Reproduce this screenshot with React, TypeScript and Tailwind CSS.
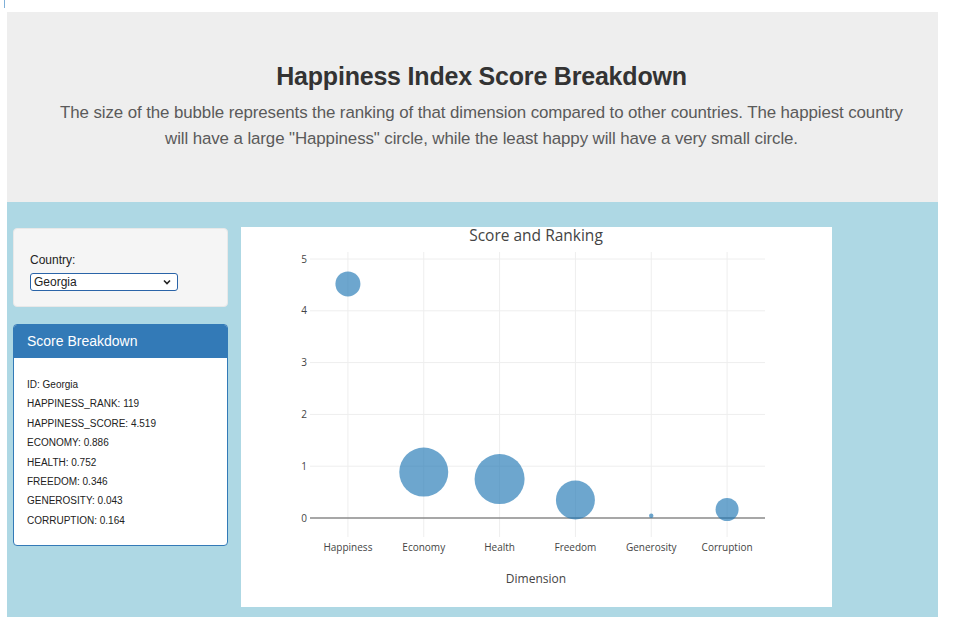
import React from "react";

const dims = [
  { name: "Happiness", value: 4.519, r: 12.5 },
  { name: "Economy", value: 0.886, r: 24.5 },
  { name: "Health", value: 0.752, r: 25 },
  { name: "Freedom", value: 0.346, r: 19.5 },
  { name: "Generosity", value: 0.043, r: 2.2 },
  { name: "Corruption", value: 0.164, r: 11.5 },
];

const info = [
  "ID: Georgia",
  "HAPPINESS_RANK: 119",
  "HAPPINESS_SCORE: 4.519",
  "ECONOMY: 0.886",
  "HEALTH: 0.752",
  "FREEDOM: 0.346",
  "GENEROSITY: 0.043",
  "CORRUPTION: 0.164",
];

// plot area inside the chart card
const X0 = 69;
const X1 = 524;
const ZERO = 291;
const UNIT = 51.8;
const STEP = (X1 - X0) / dims.length;

function BubbleChart() {
  return (
    <svg width="591" height="380" className="block overflow-visible" style={{ fontFamily: '"Open Sans", Verdana, Arial, sans-serif' }}>
      <text x="295" y="13.5" textAnchor="middle" fontSize="15.5" fill="#444">
        Score and Ranking
      </text>

      {dims.map((d, i) => {
        const x = X0 + STEP * (i + 0.5);
        return <line key={d.name} x1={x} x2={x} y1="25" y2="310" stroke="#eeeeee" strokeWidth="1" />;
      })}
      {[1, 2, 3, 4, 5].map((t) => (
        <line key={t} x1={X0} x2={X1} y1={ZERO - t * UNIT} y2={ZERO - t * UNIT} stroke="#eeeeee" strokeWidth="1" />
      ))}
      <line x1={X0} x2={X1} y1={ZERO} y2={ZERO} stroke="#8a8a8a" strokeWidth="1.5" />

      {[0, 1, 2, 3, 4, 5].map((t) => (
        <text key={t} x="66" y={ZERO - t * UNIT + 3.5} textAnchor="end" fontSize="10" fill="#444">
          {t}
        </text>
      ))}

      {dims.map((d, i) => {
        const x = X0 + STEP * (i + 0.5);
        return (
          <g key={d.name}>
            <circle cx={x} cy={ZERO - d.value * UNIT} r={d.r} fill="#1f77b4" fillOpacity="0.65" />
            <text x={x} y="324" textAnchor="middle" fontSize="10" fill="#444">
              {d.name}
            </text>
          </g>
        );
      })}

      <text x="295" y="356" textAnchor="middle" fontSize="12" fill="#444">
        Dimension
      </text>
    </svg>
  );
}

export default function App() {
  return (
    <div className="relative min-h-screen bg-white text-[#333]" style={{ fontFamily: '"Liberation Sans", Arial, sans-serif' }}>
      <div className="absolute left-[4px] top-0 w-[1px] h-[8px] bg-[#7fb0d8]" />

      <div className="ml-[7px] w-[931px] pt-[12px]">
        <div className="h-[190px] bg-[#eeeeee] pl-[18px] flex flex-col items-center pt-[48px]">
          <h1 className="text-[25px] leading-[32px] font-semibold text-[#333] tracking-[-0.2px]">
            Happiness Index Score Breakdown
          </h1>
          <p className="mt-[8px] text-[16.9px] leading-[26px] text-[#5a5a5a] text-center tracking-[-0.1px]">
            The size of the bubble represents the ranking of that dimension compared to other countries. The happiest country
            <br />
            will have a large "Happiness" circle, while the least happy will have a very small circle.
          </p>
        </div>

        <div className="h-[415px] bg-[#aed8e4] flex items-start pl-[6px] pt-[25px] gap-[13px]">
          <div className="w-[215px] flex flex-col gap-[17px] pt-[1px]">
            <div className="h-[79px] bg-[#f5f5f5] border border-[#e8e8e8] rounded-[4px] pl-[16px] pt-[24px]">
              <div className="text-[12px] leading-[14px] text-[#222]">Country:</div>
              <div className="mt-[6px] w-[148px] h-[18px] border-[1.5px] border-[#2a64a8] rounded-[3px] bg-white flex items-center justify-between pl-[3px] pr-[6px]">
                <span className="text-[12px] leading-[14px] text-[#222]">Georgia</span>
                <svg width="8" height="6" viewBox="0 0 8 6">
                  <path d="M1 1.5 L4 4.5 L7 1.5" fill="none" stroke="#222" strokeWidth="1.6" />
                </svg>
              </div>
            </div>

            <div className="h-[222px] bg-white border border-[#337ab7] rounded-[4px] overflow-hidden">
              <div className="h-[33px] bg-[#337ab7] flex items-center pl-[13px]">
                <span className="text-white text-[14px]">Score Breakdown</span>
              </div>
              <div className="pl-[13px] pt-[17px] flex flex-col">
                {info.map((line) => (
                  <div key={line} className="text-[10px] leading-[19.4px] text-[#222]">
                    {line}
                  </div>
                ))}
              </div>
            </div>
          </div>

          <div className="w-[591px] h-[380px] bg-white">
            <BubbleChart />
          </div>
        </div>
      </div>
    </div>
  );
}
